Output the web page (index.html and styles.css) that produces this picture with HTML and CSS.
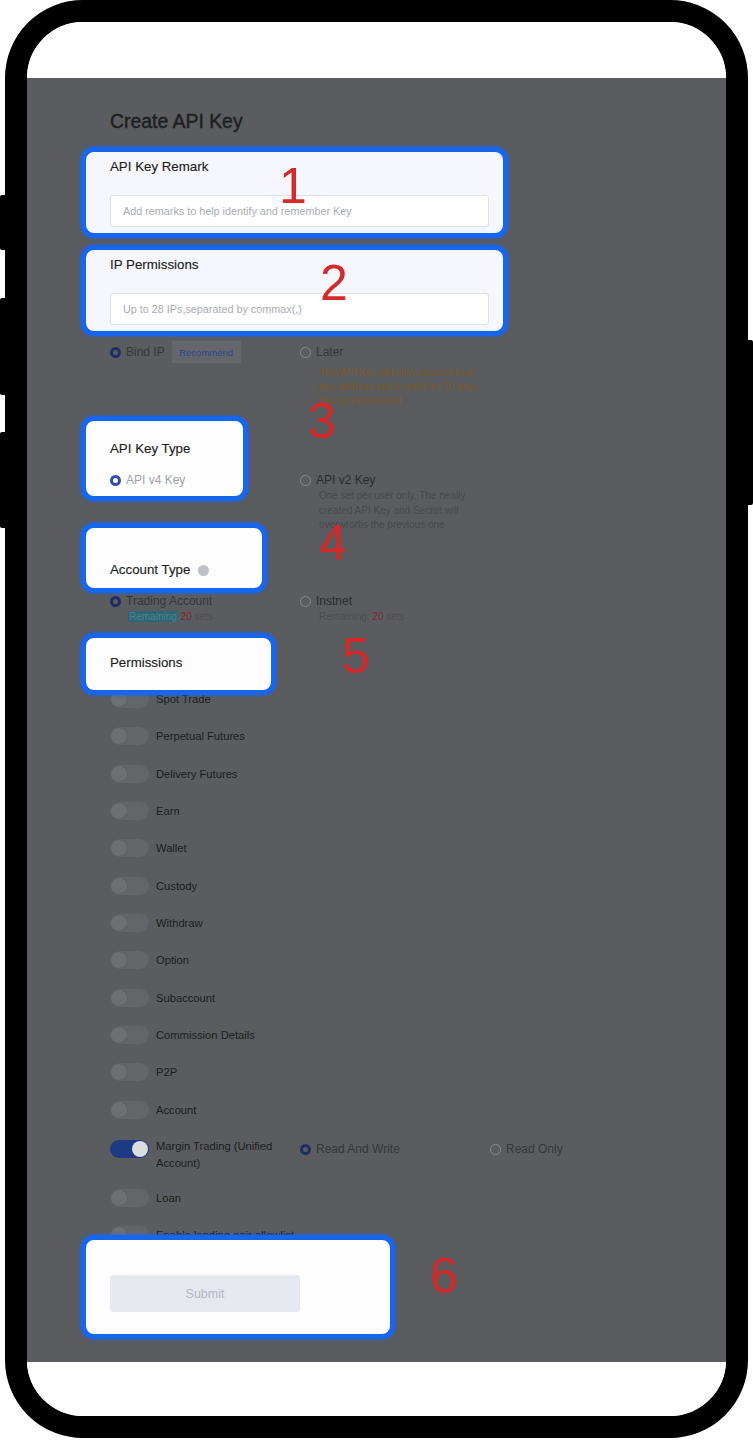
FILE: index.html
```html
<!DOCTYPE html>
<html lang="en">
<head>
<meta charset="utf-8">
<title>Create API Key</title>
<link rel="stylesheet" href="styles.css">
</head>
<body>
<div class="device">
  <div class="rail rail-left">
    <span class="hw-btn hw-1"></span>
    <span class="hw-btn hw-2"></span>
    <span class="hw-btn hw-3"></span>
  </div>
  <div class="phone">
    <div class="screen">
      <div class="topbar"></div>
      <main class="page">
        <h1 class="title">Create API Key</h1>

        <section class="spot spot-wide spot-remark">
          <div class="spot-label">API Key Remark</div>
          <div class="input">Add remarks to help identify and remember Key</div>
        </section>

        <section class="spot spot-wide spot-ip">
          <div class="spot-label">IP Permissions</div>
          <div class="input">Up to 28 IPs,separated by commax(,)</div>
        </section>

        <div class="choice-row bind-row">
          <div class="col1">
            <div class="option"><span class="radio on"></span>Bind IP<span class="tag">Recommend</span></div>
          </div>
          <div class="col2">
            <div class="option"><span class="radio"></span>Later</div>
            <div class="desc warn">This API Key will allew sccess from<br>any address snd is valld for 70 days.<br>Not recommended</div>
          </div>
        </div>

        <div class="type-row">
          <section class="spot spot-type">
            <div class="spot-label">API Key Type</div>
            <div class="option option-sm light"><span class="radio on-light"></span>API v4 Key</div>
          </section>
          <div class="col2 type-col2">
            <div class="option option-sm dark"><span class="radio"></span>API v2 Key</div>
            <div class="desc note">One set per user only. The neally<br>created API Key and Secret will<br>overwrortis the previous one</div>
          </div>
        </div>

        <section class="spot spot-account">
          <div class="spot-label label-info">Account Type <span class="info"></span></div>
        </section>

        <div class="choice-row account-row">
          <div class="col1">
            <div class="option option-sm"><span class="radio on"></span>Trading Account</div>
            <div class="remain"><span class="sel">Remaining</span> <span class="num">20</span> sets</div>
          </div>
          <div class="col2">
            <div class="option option-sm dark"><span class="radio"></span>Instnet</div>
            <div class="remain remain-2">Remaining: <span class="num">20</span> sets</div>
          </div>
        </div>

        <section class="spot spot-perm">
          <div class="spot-label">Permissions</div>
        </section>

        <div class="perm-list">
          <div class="perm"><span class="switch"></span>Spot Trade</div>
          <div class="perm"><span class="switch"></span>Perpetual Futures</div>
          <div class="perm"><span class="switch"></span>Delivery Futures</div>
          <div class="perm"><span class="switch"></span>Earn</div>
          <div class="perm"><span class="switch"></span>Wallet</div>
          <div class="perm"><span class="switch"></span>Custody</div>
          <div class="perm"><span class="switch"></span>Withdraw</div>
          <div class="perm"><span class="switch"></span>Option</div>
          <div class="perm"><span class="switch"></span>Subaccount</div>
          <div class="perm"><span class="switch"></span>Commission Details</div>
          <div class="perm"><span class="switch"></span>P2P</div>
          <div class="perm"><span class="switch"></span>Account</div>
          <div class="perm perm-multi">
            <span class="switch on"></span>
            <span class="perm-text">Margin Trading (Unified Account)</span>
            <div class="option perm-opt"><span class="radio on"></span>Read And Write</div>
            <div class="option perm-opt"><span class="radio"></span>Read Only</div>
          </div>
          <div class="perm"><span class="switch"></span>Loan</div>
          <div class="perm"><span class="switch"></span>Enable lending pair allowlist</div>
        </div>

        <section class="spot spot-submit">
          <button class="submit-btn" type="button">Submit</button>
        </section>
      </main>
      <div class="homebar"></div>

      <span class="mark m1">1</span>
      <span class="mark m2">2</span>
      <span class="mark m3">3</span>
      <span class="mark m4">4</span>
      <span class="mark m5">5</span>
      <span class="mark m6">6</span>
    </div>
  </div>
  <div class="rail rail-right">
    <span class="hw-btn hw-r"></span>
  </div>
</div>
</body>
</html>
```
FILE: styles.css
```css
html, body {
  margin: 0;
  padding: 0;
  background: #ffffff;
}

body {
  font-family: "Liberation Sans", Arial, Helvetica, sans-serif;
}

.device {
  display: flex;
  width: 753px;
  height: 1440px;
}

.rail {
  width: 5px;
  flex: none;
  display: flex;
  flex-direction: column;
}

.hw-btn {
  display: block;
  width: 6px;
  background: #000;
}

.rail-left .hw-btn {
  border-radius: 2px 0 0 2px;
}

.hw-1 { margin-top: 195px; height: 55px; }
.hw-2 { margin-top: 48px; height: 97px; }
.hw-3 { margin-top: 37px; height: 96px; }

.rail-right .hw-btn {
  margin-left: -1px;
  border-radius: 0 2px 2px 0;
}

.hw-r { margin-top: 340px; height: 165px; }

.phone {
  width: 743px;
  height: 1438px;
  flex: none;
  box-sizing: border-box;
  border: 22px solid #000;
  border-radius: 78px;
  background: #fff;
  overflow: hidden;
}

.screen {
  position: relative;
  height: 100%;
  display: flex;
  flex-direction: column;
}

.topbar {
  height: 56px;
  flex: none;
  background: #fff;
}

.homebar {
  flex: 1;
  background: #fff;
}

.page {
  height: 1284px;
  flex: none;
  box-sizing: border-box;
  background: #5b5c5f;
  padding: 31px 0 0 83px;
}

.title {
  margin: 0;
  font-size: 19.4px;
  font-weight: 400;
  line-height: 24px;
  color: #1e1f22;
  -webkit-text-stroke: 0.45px #1e1f22;
}

/* highlighted blocks */
.spot {
  position: relative;
  z-index: 1;
  box-sizing: border-box;
  margin-left: -29px;
  border: 5px solid #1766f0;
  border-radius: 13px;
  background: #fdfdfe;
  box-shadow: 0 0 3px 1px rgba(23, 102, 240, 0.55);
}

.spot-label {
  font-size: 13.3px;
  line-height: 20px;
  color: #1d1e21;
  -webkit-text-stroke: 0.15px #1d1e21;
}

.spot-wide {
  width: 427px;
  padding: 5px 14px 6px 24px;
  background: #f5f7fc;
}

.spot-wide .spot-label {
  margin-bottom: 18px;
}

.spot-remark { margin-top: 14px; }
.spot-ip { margin-top: 7px; }

.input {
  height: 32px;
  box-sizing: border-box;
  border: 1px solid #dfe1e7;
  border-radius: 3px;
  background: #ffffff;
  padding-left: 12px;
  display: flex;
  align-items: center;
  font-size: 10.8px;
  color: #a9acb5;
}

/* radio choices */
.choice-row {
  display: flex;
}

.col1 {
  width: 190px;
  flex: none;
}

.col2 {
  flex: 1;
}

.option {
  display: flex;
  align-items: center;
  gap: 5px;
  height: 22px;
  font-size: 12px;
  color: #36373b;
  white-space: nowrap;
}

.option-sm {
  height: 16px;
}

.option.dark {
  color: #2a2b2e;
}

.option.light {
  color: #a0a3ab;
}

.radio {
  width: 11px;
  height: 11px;
  box-sizing: border-box;
  border-radius: 50%;
  border: 1px solid #8a8b8f;
  flex: none;
}

.radio.on {
  border: 3px solid #1d2d66;
}

.radio.on-light {
  border: 3px solid #2f4fae;
  background: #fff;
}

.tag {
  margin-left: 2px;
  height: 22px;
  padding: 0 7.5px;
  display: flex;
  align-items: center;
  background: #64666b;
  color: #2b4690;
  font-size: 9.5px;
}

.bind-row {
  margin-top: 5px;
}

.desc {
  padding-left: 19px;
  font-size: 10px;
  line-height: 14px;
  white-space: nowrap;
}

.desc.warn {
  margin-top: 3px;
  color: #795a2e;
}

.type-row {
  display: flex;
  align-items: flex-start;
  height: 85px;
  margin-top: 8px;
}

.spot-type {
  width: 167px;
  flex: none;
  margin-right: 52px;
  padding: 18px 0 8px 24px;
}

.spot-type .spot-label {
  margin-bottom: 13px;
}

.type-col2 {
  margin-top: 56px;
}

.desc.note {
  margin-top: 1px;
  line-height: 14.5px;
  color: #47484c;
}

.spot-account {
  margin-top: 22px;
  width: 186px;
  padding: 32px 0 8px 24px;
}

.label-info {
  display: flex;
  align-items: center;
  gap: 8px;
}

.info {
  width: 11px;
  height: 11px;
  border-radius: 50%;
  background: #c0c1c7;
}

.remain {
  margin-top: 1px;
  padding-left: 18px;
  font-size: 10px;
  line-height: 14px;
  color: #4b4c50;
  white-space: nowrap;
}

.remain-2 {
  padding-left: 19px;
}

.sel {
  padding: 0 1px;
  background: #2c6776;
  color: #54808b;
}

.num {
  color: #7c2b36;
}

.spot-perm {
  margin-top: 9px;
  width: 195px;
  padding: 15px 0 17px 24px;
}

/* permissions */
.perm-list {
  margin-top: -5px;
  display: flex;
  flex-direction: column;
  gap: 19.35px;
}

.perm {
  display: flex;
  align-items: center;
  gap: 7px;
  height: 18px;
  font-size: 11.2px;
  color: #1c1d20;
  white-space: nowrap;
}

.switch {
  position: relative;
  width: 39px;
  height: 18px;
  flex: none;
  border-radius: 9px;
  background: #646569;
}

.switch::after {
  content: "";
  position: absolute;
  left: 1px;
  top: 1px;
  width: 16px;
  height: 16px;
  border-radius: 50%;
  background: #6e6f72;
  box-shadow: 0 0 1px rgba(0, 0, 0, 0.25);
}

.switch.on {
  background: #1f3a84;
}

.switch.on::after {
  left: 22px;
  background: #dcdde0;
}

.perm-multi {
  height: auto;
  align-items: flex-start;
  margin-bottom: -2.5px;
}

.perm-multi .switch {
  margin-top: 2px;
}

.perm-text {
  width: 137px;
  flex: none;
  line-height: 17px;
  white-space: normal;
}

.perm-opt {
  width: 183px;
  height: 18px;
  margin-top: 2px;
  flex: none;
}

.spot-submit {
  margin-top: -9px;
  width: 314px;
  padding: 35px 0 22px 24px;
}

.submit-btn {
  display: block;
  width: 190px;
  height: 37px;
  border: none;
  border-radius: 3px;
  background: #e6e8ef;
  color: #b3b7c2;
  font-family: inherit;
  font-size: 12.5px;
  padding: 0;
}

/* annotation numbers */
.mark {
  position: absolute;
  z-index: 2;
  font-family: "Liberation Sans", Arial, sans-serif;
  font-size: 50px;
  line-height: 50px;
  color: #d42a2a;
}

.m1 { left: 252px; top: 139px; }
.m2 { left: 293px; top: 236px; }
.m3 { left: 281px; top: 374px; }
.m4 { left: 292px; top: 496px; }
.m5 { left: 315px; top: 609px; }
.m6 { left: 403px; top: 1229px; }
```
